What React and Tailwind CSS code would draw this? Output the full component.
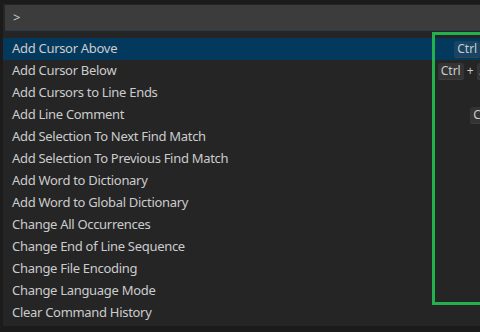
import React from "react";

const rows = [
  { label: "Add Cursor Above", keys: ["Ctrl", "Alt", "UpArrow"] },
  { label: "Add Cursor Below", keys: ["Ctrl", "Alt", "DownArrow"] },
  { label: "Add Cursors to Line Ends", keys: [] },
  { label: "Add Line Comment", keys: ["Ctrl", "K"], chord: ["Ctrl", "C"] },
  { label: "Add Selection To Next Find Match", keys: [] },
  { label: "Add Selection To Previous Find Match", keys: [] },
  { label: "Add Word to Dictionary", keys: [] },
  { label: "Add Word to Global Dictionary", keys: [] },
  { label: "Change All Occurrences", keys: [] },
  { label: "Change End of Line Sequence", keys: [] },
  { label: "Change File Encoding", keys: [] },
  { label: "Change Language Mode", keys: [] },
  { label: "Clear Command History", keys: [] },
];

function Key({ k }) {
  return (
    <span className="mx-[2px] inline-flex h-[17px] items-center rounded-[3px] bg-[rgba(128,128,128,0.17)] px-[3px] text-[12px] leading-none text-[#cccccc] shadow-[inset_0_-1px_0_rgba(68,68,68,0.6)]">
      {k}
    </span>
  );
}

function Keys({ keys, chord }) {
  const group = (ks) =>
    ks.map((k, i) => (
      <React.Fragment key={i}>
        {i > 0 && <span className="px-[1px] text-[12px] text-[#cccccc]">+</span>}
        <Key k={k} />
      </React.Fragment>
    ));
  return (
    <span className="flex items-center tracking-normal">
      {group(keys)}
      {chord && <span className="w-[4px]" />}
      {chord && group(chord)}
    </span>
  );
}

export default function App() {
  return (
    <div
      className="relative h-[332px] w-[480px] overflow-hidden bg-[#1b1b1c]"
      style={{ fontFamily: '"Noto Sans", "Open Sans", sans-serif' }}
    >
      <div className="ml-[3px] mt-[4px] h-[322px] w-[592px] bg-[#252526] pt-[1px]">
        <div className="ml-[2px] flex h-[26px] items-center border-b border-[#2b3a48] bg-[#3c3c3c] pl-[8px] text-[13px] text-[#cccccc]">
          &gt;
        </div>
        <div className="mt-[7px] flex flex-col">
          {rows.map((r, i) => (
            <div
              key={i}
              className={`flex h-[22px] items-center justify-between pl-[9px] pr-[10px] text-[13px] tracking-[-0.3px] text-[#cccccc] ${
                i === 0 ? "bg-[#04395e]" : ""
              }`}
            >
              <span>{r.label}</span>
              {r.keys.length > 0 && <Keys keys={r.keys} chord={r.chord} />}
            </div>
          ))}
        </div>
      </div>
      <div className="absolute left-[432px] top-[32px] h-[273px] w-[100px] border-[3px] border-[#22b14c]" />
    </div>
  );
}
